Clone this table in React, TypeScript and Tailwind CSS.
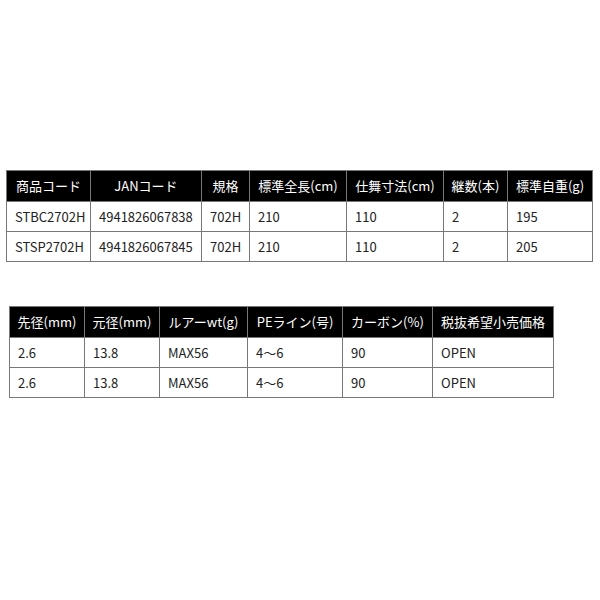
const font = { fontFamily: '"Noto Sans CJK JP", "Noto Sans", sans-serif' };

type Col = { label: string; w: string };

const specCols: Col[] = [
  { label: "商品コード", w: "w-[84px]" },
  { label: "JANコード", w: "w-[111px]" },
  { label: "規格", w: "w-[48px]" },
  { label: "標準全長(cm)", w: "w-[97px]" },
  { label: "仕舞寸法(cm)", w: "w-[97px]" },
  { label: "継数(本)", w: "w-[64px]" },
  { label: "標準自重(g)", w: "w-[85px]" },
];

const specRows = [
  ["STBC2702H", "4941826067838", "702H", "210", "110", "2", "195"],
  ["STSP2702H", "4941826067845", "702H", "210", "110", "2", "205"],
];

const detailCols: Col[] = [
  { label: "先径(mm)", w: "w-[75px]" },
  { label: "元径(mm)", w: "w-[75px]" },
  { label: "ルアーwt(g)", w: "w-[88px]" },
  { label: "PEライン(号)", w: "w-[95px]" },
  { label: "カーボン(%)", w: "w-[90px]" },
  { label: "税抜希望小売価格", w: "w-[121px]" },
];

const detailRows = [
  ["2.6", "13.8", "MAX56", "4〜6", "90", "OPEN"],
  ["2.6", "13.8", "MAX56", "4〜6", "90", "OPEN"],
];

const SpecTable = ({
  cols,
  rows,
  width,
}: {
  cols: Col[];
  rows: string[][];
  width: string;
}) => {
  return (
    <table
      className={`${width} table-fixed border-collapse text-[13px] text-[#222]`}
    >
      <thead>
        <tr className="h-[31px] bg-black text-white">
          {cols.map((c) => (
            <th
              key={c.label}
              className={`${c.w} border border-[#777] px-0 text-center font-normal whitespace-nowrap`}
            >
              {c.label}
            </th>
          ))}
        </tr>
      </thead>
      <tbody>
        {rows.map((r, i) => (
          <tr key={i} className="h-[30px]">
            {r.map((v, j) => (
              <td
                key={j}
                className="border border-[#777] px-[8px] text-left whitespace-nowrap"
              >
                {v}
              </td>
            ))}
          </tr>
        ))}
      </tbody>
    </table>
  );
};

export default function App() {
  return (
    <div className="h-[600px] w-[600px] bg-white" style={font}>
      <div className="pt-[170px] pl-[6px]">
        <SpecTable cols={specCols} rows={specRows} width="w-[586px]" />
      </div>
      <div className="pt-[44px] pl-[9px]">
        <SpecTable cols={detailCols} rows={detailRows} width="w-[544px]" />
      </div>
    </div>
  );
}
